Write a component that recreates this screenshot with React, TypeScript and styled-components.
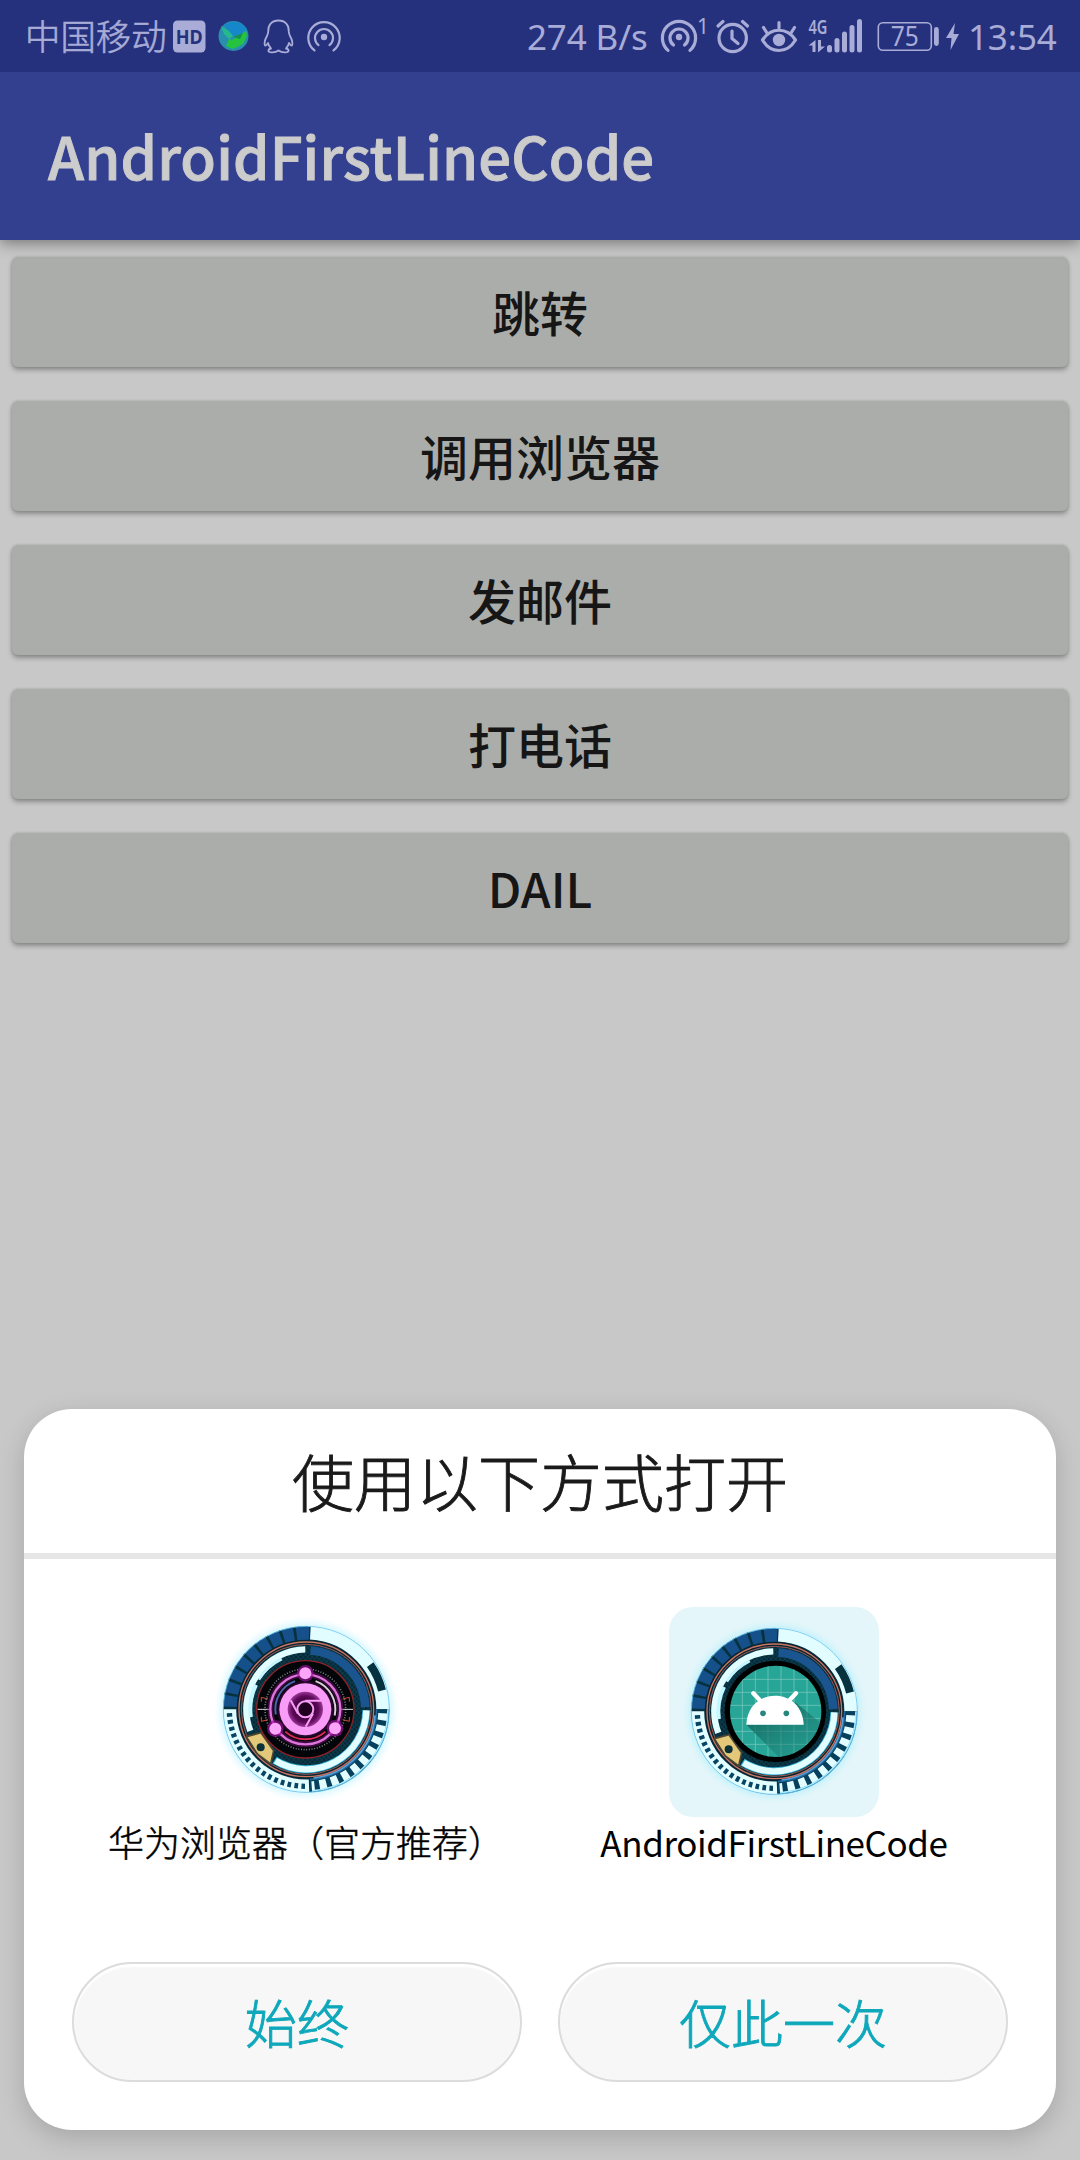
import React from "react";
import styled, { createGlobalStyle } from "styled-components";

const FONT = '"Noto Sans CJK SC", "Noto Sans", sans-serif';
const STATUS = "#a8acd6";

const GlobalStyle = createGlobalStyle`
  html, body { margin: 0; padding: 0; background: #c8c8c8; }
  * { box-sizing: border-box; }
`;

const Screen = styled.div`
  position: relative;
  width: 1080px;
  height: 2160px;
  overflow: hidden;
  background: #c8c8c8;
  font-family: ${FONT};
  display: flex;
  flex-direction: column;
`;

const StatusBar = styled.header`
  height: 72px;
  flex: none;
  padding: 0 24px 0 25px;
  display: flex;
  align-items: center;
  justify-content: space-between;
  background: #26317e;
  color: ${STATUS};
  z-index: 2;
`;

const StatusGroup = styled.div`
  display: flex;
  align-items: center;
  height: 72px;
`;

const Carrier = styled.span`
  display: block;
  width: 148px;
  height: 72px;
  font-size: 35.4px;
  line-height: 70px;
  font-weight: 300;
  -webkit-text-stroke: 0.6px ${STATUS};
  white-space: nowrap;
`;

const StatusValue = styled.span<{ $width: number; $left?: number }>`
  display: block;
  width: ${(p) => p.$width}px;
  height: 72px;
  margin-left: ${(p) => p.$left ?? 0}px;
  padding-top: 1px;
  font-family: "Noto Sans", sans-serif;
  font-size: 35px;
  line-height: 72px;
  letter-spacing: -0.15px;
  white-space: nowrap;
`;

const Glyph = styled.svg<{ $left?: number }>`
  display: block;
  flex: none;
  height: 72px;
  margin-left: ${(p) => p.$left ?? 0}px;
  overflow: visible;
`;

const AppBar = styled.div`
  height: 168px;
  flex: none;
  padding: 0 48px 3px;
  display: flex;
  align-items: center;
  background: #334090;
  box-shadow: 0 3px 14px rgba(0, 0, 0, 0.42);
  z-index: 1;
`;

const AppTitle = styled.h1`
  margin: 0;
  font-size: 58px;
  line-height: 84px;
  font-weight: 500;
  letter-spacing: 0.12px;
  -webkit-text-stroke: 0.9px #cccccc;
  color: #cccccc;
  white-space: nowrap;
`;

const ButtonList = styled.main`
  display: flex;
  flex-direction: column;
  gap: 34px;
  padding: 17px 12px 0;
`;

const ListButton = styled.button`
  height: 110px;
  border: 0;
  border-radius: 6px;
  padding: 0 0 3px;
  background: #abadab;
  box-shadow: 0 3px 5px rgba(0, 0, 0, 0.3), 0 0 3px rgba(0, 0, 0, 0.14);
  color: #161616;
  font: 500 48px/70px ${FONT};
`;

const Sheet = styled.section`
  position: absolute;
  left: 24px;
  top: 1409px;
  width: 1032px;
  height: 721px;
  z-index: 3;
  border-radius: 48px;
  background: #fff;
  box-shadow: 0 8px 26px rgba(0, 0, 0, 0.17);
  display: flex;
  flex-direction: column;
`;

const SheetTitle = styled.h2`
  margin: 0;
  height: 150px;
  flex: none;
  border-bottom: 6px solid #e6e6e6;
  font-size: 62px;
  line-height: 143px;
  font-weight: 300;
  -webkit-text-stroke: 0.9px #1a1a1a;
  text-align: center;
  color: #1a1a1a;
`;

const Targets = styled.div`
  display: grid;
  grid-template-columns: 468px 468px;
  padding: 48px 48px 0;
  height: 403px;
`;

const Target = styled.div`
  display: flex;
  flex-direction: column;
  align-items: center;
`;

const IconTile = styled.div<{ $selected?: boolean; $lift: number }>`
  width: 210px;
  height: 210px;
  padding-bottom: ${(p) => p.$lift}px;
  border-radius: 24px;
  background: ${(p) => (p.$selected ? "#e4f6f9" : "transparent")};
  display: flex;
  align-items: center;
  justify-content: center;
`;

const TargetLabel = styled.div<{ $latin?: boolean }>`
  font-size: ${(p) => (p.$latin ? 35 : 36)}px;
  line-height: 49px;
  color: #000;
  font-weight: ${(p) => (p.$latin ? 400 : 300)};
  letter-spacing: ${(p) => (p.$latin ? -0.4 : 0)}px;
  -webkit-text-stroke: ${(p) => (p.$latin ? 0 : 0.5)}px #000;
  white-space: nowrap;
`;

const Actions = styled.div`
  display: flex;
  gap: 36px;
  padding: 0 48px;
`;

const PillButton = styled.button`
  flex: 1;
  height: 120px;
  border: 2px solid #dcdcdc;
  border-radius: 60px;
  background: #f7f7f7;
  box-shadow: inset 0 3px 2px #fff;
  color: #0fa8bb;
  font: 300 52px/76px ${FONT};
  -webkit-text-stroke: 0.9px #0fa8bb;
  padding: 0;
`;

const rad = (d: number) => (d * Math.PI) / 180;
const pt = (r: number, d: number) => `${(r * Math.cos(rad(d))).toFixed(2)} ${(r * Math.sin(rad(d))).toFixed(2)}`;

type ArcProps = { r: number; from: number; to: number; w: number; color: string; dash?: string };
const Arc = ({ r, from, to, w, color, dash }: ArcProps) => (
  <path
    d={`M${pt(r, from)} A${r} ${r} 0 ${to - from > 180 ? 1 : 0} 1 ${pt(r, to)}`}
    fill="none"
    stroke={color}
    strokeWidth={w}
    strokeDasharray={dash}
  />
);

const RingIcon = ({ id, children }: { id: string; children: React.ReactNode }) => (
  <svg width="187" height="187" viewBox="-280 -280 561 561">
    <defs>
      <radialGradient id={`${id}-glow`}>
        <stop offset="0.88" stopColor="#7fe6ff" stopOpacity="0.4" />
        <stop offset="1" stopColor="#c8f4ff" stopOpacity="0" />
      </radialGradient>
      <pattern id={`${id}-mesh`} width="14" height="14" patternUnits="userSpaceOnUse">
        <rect width="14" height="14" fill="#0a3a4a" />
        <circle cx="4" cy="4" r="3" fill="#04202c" />
        <circle cx="11" cy="11" r="3" fill="#04202c" />
      </pattern>
    </defs>
    <circle r="278" fill={`url(#${id}-glow)`} />
    <circle r="249" fill="#0b3345" />
    <Arc r={229} from={180} to={272} w={40} color="#15508a" />
    <Arc r={228} from={180} to={270} w={44} color="#06313f" dash="8 32" />
    <Arc r={230} from={273} to={360} w={40} color="#e2fdff" />
    <Arc r={234} from={325} to={346} w={24} color="#06313f" />
    <Arc r={228} from={0} to={87} w={42} color="#1d6aa0" />
    <Arc r={230} from={0} to={87} w={34} color="#07405c" />
    <Arc r={230} from={3} to={86} w={28} color="#e2fdff" dash="21 15" />
    <Arc r={245} from={0} to={86} w={5} color="#a8ecff" />
    <Arc r={230} from={88} to={180} w={39} color="#e2fdff" />
    <Arc r={231} from={91} to={178} w={16} color="#0a4463" dash="11 10" />
    <circle r="249" fill="none" stroke="#6cc8f2" strokeWidth="2.5" />
    <circle r="208" fill="#08222e" />
    <circle r="197" fill={`url(#${id}-mesh)`} />
    <Arc r={177} from={274} to={358} w={26} color="#1a5590" />
    <Arc r={207} from={5} to={84} w={5} color="#5a9fd8" />
    <circle r="202" fill="none" stroke="#c77463" strokeWidth="4" />
    <circle r="195" fill="none" stroke="#9b5650" strokeWidth="3" />
    <Arc r={180} from={159} to={269} w={19} color="#e2fdff" />
    <Arc r={168} from={172} to={206} w={12} color="#c4f7ff" />
    <Arc r={168} from={212} to={244} w={8} color="#c4f7ff" />
    <Arc r={180} from={1} to={122} w={24} color="#35aed2" />
    <Arc r={180} from={1} to={121} w={19} color="#e2fdff" />
    <path d="M-180 82 L-136 70 L-98 124 L-107 164 L-147 134 Z" fill="#e2c878" stroke="#4b4532" strokeWidth="5" />
    <circle cx="-137" cy="114" r="12" fill="#0b3038" />
    {children}
  </svg>
);

const BrowserIcon = () => (
  <RingIcon id="browser">
    <defs>
      <radialGradient id="core">
        <stop offset="0.2" stopColor="#21001f" />
        <stop offset="0.75" stopColor="#5e0a5a" />
        <stop offset="1" stopColor="#9c3898" />
      </radialGradient>
      <radialGradient id="halo">
        <stop offset="0.75" stopColor="#b51cb1" />
        <stop offset="1" stopColor="#5a0058" stopOpacity="0" />
      </radialGradient>
    </defs>
    <g transform="translate(-3 0)">
      <circle r="146" fill="#030608" stroke="#8b2028" strokeWidth="4" />
      <circle r="121" fill="none" stroke="#7e7e84" strokeWidth="5" strokeDasharray="3 5" />
      {[0, 180].map((a) => (
        <g key={a} transform={`rotate(${a})`}>
          <path d="M108 0H143" stroke="#ddd" strokeWidth="3" />
          <path d="M112 31L132 36V23M112 -31L132 -36V-23" stroke="#c94b35" strokeWidth="3" fill="none" />
        </g>
      ))}
      <circle r="105" fill="none" stroke="#7a0f76" strokeWidth="18" opacity="0.5" />
      <circle r="105" fill="none" stroke="#dd75dc" strokeWidth="7" />
      <Arc r={90} from={170} to={250} w={6} color="#4a66ae" />
      <Arc r={90} from={290} to={372} w={6} color="#ddd0dd" />
      <Arc r={90} from={48} to={132} w={6} color="#e02858" />
      <circle r="90" fill="url(#halo)" opacity="0.7" />
      <circle r="78" fill="#f99cf7" />
      <circle r="53" fill="url(#core)" />
      <circle r="24" fill="#21001f" stroke="#f99cf7" strokeWidth="6" />
      <path d="M0 -26H48M-22 13L-44 -27M23 13L1 52" stroke="#f99cf7" strokeWidth="6" fill="none" />
      {[[0, -108], [-90, 58], [89, 57]].map(([x, y]) => (
        <g key={x}>
          <circle cx={x} cy={y} r="25" fill="#a011a0" opacity="0.65" />
          <circle cx={x} cy={y} r="18" fill="#fba4f8" />
        </g>
      ))}
    </g>
  </RingIcon>
);

const AndroidIcon = () => (
  <RingIcon id="android">
    <defs>
      <clipPath id="disc">
        <circle cx="4" r="137" />
      </clipPath>
      <linearGradient id="cast" x1="0" y1="0" x2="1" y2="1">
        <stop offset="0.1" stopColor="#14635b" stopOpacity="0.9" />
        <stop offset="0.8" stopColor="#1c8077" stopOpacity="0.2" />
      </linearGradient>
    </defs>
    <circle cx="3" r="152" fill="#000" />
    <g clipPath="url(#disc)">
      <rect x="-140" y="-140" width="290" height="290" fill="#27a597" />
      <path
        d="M-96 -140V140M-57 -140V140M-19 -140V140M20 -140V140M59 -140V140M98 -140V140M-140 -96H150M-140 -57H150M-140 -18H150M-140 21H150M-140 60H150M-140 99H150"
        stroke="#83cdc5"
        strokeWidth="2"
      />
      <path d="M-84 40L40 164H200V84L62 -28L88 40Z" fill="url(#cast)" />
    </g>
    <path d="M-84 40C-82 -15 -43 -47 2 -47C47 -47 86 -15 88 40Z" fill="#fff" />
    <path d="M-63 -54L-44 -34M65 -54L46 -34" stroke="#fff" strokeWidth="13" strokeLinecap="round" />
    <circle cx="-34" cy="6" r="8.5" fill="#27877d" />
    <circle cx="36" cy="6" r="8.5" fill="#27877d" />
  </RingIcon>
);

const Hotspot = ({ left, bold }: { left: number; bold?: boolean }) => (
  <Glyph $left={left} width="36" viewBox="-18 -36 36 72" fill="none" stroke={STATUS} strokeWidth={bold ? 3.2 : 2.2} strokeLinecap="round">
    <path d={bold ? "M-11 13.8A16.6 16.6 0 1 1 11 13.8" : "M-9.5 13.8A15.7 15.7 0 1 1 9.5 13.8"} transform="translate(0 .6)" />
    <path d="M-5.5 8.5A9 9 0 1 1 5.5 8.5" transform="translate(0 .6)" />
    <circle cy="1" r="3.2" fill={STATUS} stroke="none" />
  </Glyph>
);

const BUTTONS = ["跳转", "调用浏览器", "发邮件", "打电话", "DAIL"];

export default function App() {
  return (
    <Screen>
      <GlobalStyle />
      <StatusBar>
        <StatusGroup>
          <Carrier>中国移动</Carrier>
          <Glyph width="33" viewBox="173 0 33 72">
            <rect x="173" y="20.5" width="32.5" height="32" rx="4.5" fill={STATUS} />
            <text x="189.3" y="43.5" textAnchor="middle" fontFamily="Noto Sans" fontWeight="700" fontSize="20" fill="#26317e" textLength="27" lengthAdjust="spacingAndGlyphs">HD</text>
          </Glyph>
          <Glyph $left={12} width="32" viewBox="218 0 32 72">
            <circle cx="233.5" cy="36" r="15" fill="#298fae" />
            <path d="M224 25C231 20 242 21 247 29L236 37L231 34Z" fill="#1688ca" />
            <path d="M221 26L229 31L233 36L229 39L224 34Z" fill="#26b88e" />
            <path d="M232 40L246 31L247 36L243 44L233 49L226 46L229 39Z" fill="#25c340" />
            <path d="M233 37L243 33L240 39Z" fill="#15914a" />
          </Glyph>
          <Glyph $left={13} width="32" viewBox="263 0 32 72" fill="none" stroke={STATUS} strokeWidth="1.8" strokeLinejoin="round">
            <path d="M278.5 20.5C271.5 20.5 268 25.5 268.3 31C268.3 33 267.5 34.5 267 36C265 39.5 264 43 265 45.5C266 46 267 44.5 268 43C268.5 45.5 269.5 47 271 48.5C268 49 267.5 51.5 270 52.2C273 52.8 276.5 52 278.5 50.5C280.5 52 284 52.8 287 52.2C289.5 51.5 289 49 286 48.5C287.5 47 288.5 45.5 289 43C290 44.5 291 46 292 45.5C293 43 292 39.5 290 36C289.5 34.5 288.7 33 288.7 31C289 25.5 285.5 20.5 278.5 20.5Z" />
          </Glyph>
          <Hotspot left={11} />
        </StatusGroup>
        <StatusGroup>
          <StatusValue $width={134}>274 B/s</StatusValue>
          <Hotspot left={0} bold />
          <Glyph width="14" viewBox="697 0 14 72">
            <text x="697" y="34" fontFamily="Noto Sans" fontSize="21" fill={STATUS}>1</text>
          </Glyph>
          <Glyph $left={4} width="36" viewBox="715 0 36 72" fill="none" stroke={STATUS} strokeWidth="3.2" strokeLinecap="round" strokeLinejoin="round">
            <circle cx="732.7" cy="38" r="13.7" />
            <path d="M732 31V38.5L738 43.5M718 26L723 21.5M747.5 26L742.5 21.5" />
          </Glyph>
          <Glyph $left={9} width="38" viewBox="760 0 38 72" fill="none" stroke={STATUS} strokeWidth="3.2" strokeLinecap="round" strokeLinejoin="round">
            <path d="M762.5 40C771 27 787 27 795.5 40C787 54 771 54 762.5 40ZM779 22.5V28M763.5 27.5L767 33M794.5 27.5L791 33" />
            <circle cx="779" cy="40" r="6.2" fill={STATUS} stroke="none" />
          </Glyph>
          <Glyph $left={10} width="56" viewBox="808 0 56 72" fill={STATUS}>
            <text x="808.5" y="34" fontFamily="Noto Sans" fontWeight="600" fontSize="20" textLength="19" lengthAdjust="spacingAndGlyphs">4G</text>
            <path d="M815.5 40V52H812.5V45.5H808.5ZM818 40H821V46.5H825L818 52.5Z" />
            <rect x="827" y="45" width="5" height="7.5" rx="2.5" />
            <rect x="834.5" y="38" width="5" height="14.5" rx="2.5" />
            <rect x="842" y="31.5" width="5" height="21" rx="2.5" />
            <rect x="849.5" y="25" width="5" height="27.5" rx="2.5" />
            <rect x="857" y="19" width="5" height="33.5" rx="2.5" />
          </Glyph>
          <Glyph $left={13} width="83" viewBox="877 0 83 72" fill={STATUS}>
            <rect x="878.3" y="22.8" width="53" height="27.5" rx="4.5" fill="none" stroke={STATUS} strokeWidth="1.6" />
            <rect x="934" y="27" width="4.8" height="19" rx="2.4" />
            <text x="904.8" y="46" textAnchor="middle" fontFamily="Noto Sans" fontSize="28" textLength="28" lengthAdjust="spacingAndGlyphs">75</text>
            <path d="M955 23L946 38H951.5L950.5 50L959 34H953.5Z" />
          </Glyph>
          <StatusValue $left={8} $width={88}>13:54</StatusValue>
        </StatusGroup>
      </StatusBar>
      <AppBar>
        <AppTitle>AndroidFirstLineCode</AppTitle>
      </AppBar>
      <ButtonList>
        {BUTTONS.map((label) => (
          <ListButton key={label}>{label}</ListButton>
        ))}
      </ButtonList>
      <Sheet>
        <SheetTitle>使用以下方式打开</SheetTitle>
        <Targets>
          <Target>
            <IconTile $lift={5}>
              <BrowserIcon />
            </IconTile>
            <TargetLabel>华为浏览器（官方推荐）</TargetLabel>
          </Target>
          <Target>
            <IconTile $selected $lift={2}>
              <AndroidIcon />
            </IconTile>
            <TargetLabel $latin>AndroidFirstLineCode</TargetLabel>
          </Target>
        </Targets>
        <Actions>
          <PillButton>始终</PillButton>
          <PillButton>仅此一次</PillButton>
        </Actions>
      </Sheet>
    </Screen>
  );
}
